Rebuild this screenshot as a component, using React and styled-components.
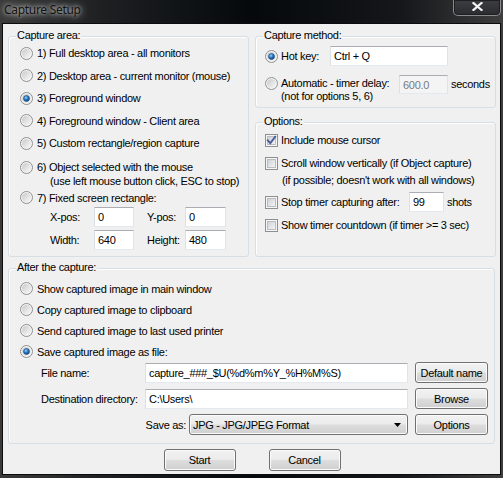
import React from 'react';
import styled, { createGlobalStyle } from 'styled-components';

const Global = createGlobalStyle`
  html, body { margin: 0; padding: 0; background: #1b1d1f; }
  body { width: 503px; height: 478px; overflow: hidden; }
  * { box-sizing: border-box; }
`;

const Window = styled.div`
  width: 503px;
  height: 478px;
  display: flex;
  flex-direction: column;
  padding: 0 2px 3px 2px;
  background: linear-gradient(to right, #3a3a3a 0%, #1e2022 20%, #05090c 50%, #15171a 80%, #3e3e3e 100%);
  font-family: "Liberation Sans", Arial, sans-serif;
  font-size: 11px;
  letter-spacing: -0.3px;
  color: #000;
`;

const TitleBar = styled.div`
  height: 23px;
  display: flex;
  align-items: flex-start;
  flex-shrink: 0;
`;

const Title = styled.div`
  font-family: "Noto Sans", "Open Sans", sans-serif;
  font-size: 12px;
  letter-spacing: -0.3px;
  line-height: 18px;
  padding: 1px 0 0 2px;
  color: #111;
  text-shadow: 0 0 4px rgba(255, 255, 255, 0.8), 0 0 9px rgba(255, 255, 255, 0.6), 0 0 16px rgba(255, 255, 255, 0.4);
`;

const CloseButton = styled.div`
  margin-left: auto;
  width: 48px;
  height: 16px;
  border: 1px solid #8a8a8a;
  border-top: none;
  border-radius: 0 0 5px 5px;
  box-shadow: inset 0 0 0 1px #1d1f21;
  background: linear-gradient(#3b3d40, #2a2c2f);
  display: flex;
  align-items: center;
  justify-content: center;
  padding-bottom: 3px;
`;

const Client = styled.div`
  flex: 1;
  border: 1px solid #0c0c0c;
  background: #f0f0f0;
  display: flex;
  flex-direction: column;
  padding: 12px 5px 0 5px;
`;

const TopRow = styled.div`
  display: grid;
  grid-template-columns: 241px 241px;
  column-gap: 6px;
`;

const RightColumn = styled.div`
  display: flex;
  flex-direction: column;
  gap: 14px;
`;

const Group = styled.div`
  position: relative;
  border: 1px solid #d5dfe5;
  border-radius: 3px;
  box-shadow: inset 1px 1px 0 rgba(255, 255, 255, 0.9);
  height: ${p => p.$h}px;
  padding: ${p => p.$pad};
  display: flex;
  flex-direction: column;
  margin-top: ${p => p.$mt || 0}px;
`;

const GroupLabel = styled.span`
  position: absolute;
  top: -8px;
  left: 7px;
  padding: 0 1px;
  line-height: 13px;
  background: #f0f0f0;
  white-space: nowrap;
`;

const Row = styled.div`
  display: flex;
  align-items: ${p => p.$align || 'center'};
  gap: ${p => (p.$gap != null ? p.$gap : 4)}px;
  height: ${p => (p.$h ? `${p.$h}px` : 'auto')};
  margin-top: ${p => p.$mt || 0}px;
  white-space: nowrap;
`;

const Lines = styled.div`
  line-height: ${p => p.$lh || 14}px;
  width: ${p => (p.$w ? `${p.$w}px` : 'auto')};
  flex-shrink: 0;
  white-space: nowrap;
  margin-top: ${p => p.$mt || 0}px;
`;

const SubLine = styled.div`
  line-height: ${p => p.$lh || 14}px;
  padding-left: ${p => p.$indent}px;
  white-space: nowrap;
`;

const Label = styled.span`
  display: inline-block;
  width: ${p => (p.$w ? `${p.$w}px` : 'auto')};
  flex-shrink: 0;
  white-space: nowrap;
`;

const Edit = styled.div`
  width: ${p => p.$w}px;
  height: ${p => p.$h || 20}px;
  flex-shrink: 0;
  border: 1px solid;
  border-color: #abadb3 #e2e3ea #e3e9ef #dbdfe6;
  background: ${p => (p.$disabled ? '#f4f4f4' : '#fff')};
  color: ${p => (p.$disabled ? '#7a7a7a' : '#000')};
  padding: 0 3px;
  display: flex;
  align-items: center;
  white-space: nowrap;
  overflow: hidden;
`;

const CoordGrid = styled.div`
  display: grid;
  grid-template-columns: 44px 40px 13px 38px 41px;
  grid-template-rows: 20px 20px;
  row-gap: 3px;
  margin-left: 30px;
  align-items: center;
`;

const Button = styled.button`
  font: inherit;
  letter-spacing: inherit;
  color: #000;
  width: ${p => p.$w || 73}px;
  height: ${p => p.$h || 21}px;
  padding: 0;
  border: 1px solid #707070;
  border-radius: 3px;
  background: linear-gradient(#f2f2f2 0%, #ebebeb 48%, #dddddd 52%, #cfcfcf 100%);
  box-shadow: inset 0 0 0 1px #fbfbfb;
  display: flex;
  align-items: center;
  justify-content: center;
  white-space: nowrap;
`;

const Select = styled.div`
  width: 219px;
  height: 21px;
  border: 1px solid #707070;
  border-radius: 3px;
  background: linear-gradient(#f2f2f2 0%, #ebebeb 48%, #dddddd 52%, #cfcfcf 100%);
  box-shadow: inset 0 0 0 1px #fbfbfb;
  display: flex;
  align-items: center;
  justify-content: space-between;
  padding: 0 6px 0 3px;
  white-space: nowrap;
`;

const FormGrid = styled.div`
  display: grid;
  grid-template-columns: 97px 263px 73px;
  grid-auto-rows: 21px;
  column-gap: 7px;
  row-gap: 5px;
  margin-left: 21px;
  align-items: center;
`;

const SaveAsCell = styled.div`
  grid-column: 1 / span 2;
  display: flex;
  justify-content: flex-end;
  align-items: center;
  gap: 3px;
`;

const ButtonBar = styled.div`
  display: flex;
  justify-content: center;
  gap: 33px;
  margin-top: 5px;
  padding-left: 1px;
`;

const RadioIcon = ({ checked, mt = 0 }) => (
  <svg width="13" height="13" viewBox="0 0 13 13" style={{ flexShrink: 0, marginTop: mt }}>
    <defs>
      <linearGradient id="rdFill" x1="0" y1="0" x2="1" y2="1">
        <stop offset="0" stopColor="#c8c8c8" />
        <stop offset="1" stopColor="#fafafa" />
      </linearGradient>
      <radialGradient id="rdDot" cx="40%" cy="35%" r="70%">
        <stop offset="0" stopColor="#9bd6fb" />
        <stop offset="0.45" stopColor="#2f7fc6" />
        <stop offset="1" stopColor="#0b3a6c" />
      </radialGradient>
    </defs>
    <circle cx="6.5" cy="6.5" r="6" fill="#f4f4f4" stroke="#8e8f8f" strokeWidth="1" />
    <circle cx="6.5" cy="6.5" r="4.6" fill="url(#rdFill)" />
    {checked && <circle cx="6.5" cy="6.5" r="3" fill="url(#rdDot)" stroke="#1b4e83" strokeWidth="0.6" />}
  </svg>
);

const CheckIcon = ({ checked }) => (
  <svg width="13" height="13" viewBox="0 0 13 13" style={{ flexShrink: 0 }}>
    <defs>
      <linearGradient id="cbFill" x1="0" y1="0" x2="1" y2="1">
        <stop offset="0" stopColor="#cbcfd5" />
        <stop offset="1" stopColor="#f7f7f7" />
      </linearGradient>
    </defs>
    <rect x="0.5" y="0.5" width="12" height="12" fill="#f6f6f6" stroke="#8e8f8f" />
    <rect x="2.5" y="2.5" width="8" height="8" fill="url(#cbFill)" stroke="#b9bdc3" strokeWidth="1" />
    {checked && (
      <path d="M2.8 6.4 L5.3 9.2 L10.2 2.8" stroke="#4a5f97" strokeWidth="1.9" fill="none" strokeLinecap="square" />
    )}
  </svg>
);

const CloseGlyph = () => (
  <svg width="11" height="9" viewBox="0 0 11 9">
    <path d="M1.5 1 L9.5 8 M9.5 1 L1.5 8" stroke="#f4f4f4" strokeWidth="2.2" strokeLinecap="square" />
  </svg>
);

const Arrow = () => (
  <svg width="7" height="4" viewBox="0 0 7 4">
    <path d="M0 0 H7 L3.5 4 Z" fill="#000" />
  </svg>
);

const areaItems = [
  ['1) Full desktop area - all monitors', false],
  ['2) Desktop area - current monitor (mouse)', false],
  ['3) Foreground window', true],
  ['4) Foreground window - Client area', false],
  ['5) Custom rectangle/region capture', false],
];

const afterItems = [
  ['Show captured image in main window', false],
  ['Copy captured image to clipboard', false],
  ['Send captured image to last used printer', false],
  ['Save captured image as file:', true],
];

export default function App() {
  return (
    <>
      <Global />
      <Window>
        <TitleBar>
          <Title>Capture Setup</Title>
          <CloseButton><CloseGlyph /></CloseButton>
        </TitleBar>
        <Client>
          <TopRow>
            <Group $h={221} $pad="5px 0 0 11px">
              <GroupLabel>Capture area:</GroupLabel>
              {areaItems.map(([t, c]) => (
                <Row key={t} $h={22.5}>
                  <RadioIcon checked={c} />
                  <span>{t}</span>
                </Row>
              ))}
              <Row $align="flex-start" $mt={5.5}>
                <RadioIcon mt={0.5} />
                <Lines>6) Object selected with the mouse</Lines>
              </Row>
              <SubLine $indent={30}>(use left mouse button click, ESC to stop)</SubLine>
              <Row $h={19}>
                <RadioIcon />
                <span>7) Fixed screen rectangle:</span>
              </Row>
              <CoordGrid>
                <span>X-pos:</span>
                <Edit $w={40}>0</Edit>
                <span />
                <span>Y-pos:</span>
                <Edit $w={41}>0</Edit>
                <span>Width:</span>
                <Edit $w={40}>640</Edit>
                <span />
                <span>Height:</span>
                <Edit $w={41}>480</Edit>
              </CoordGrid>
            </Group>
            <RightColumn>
              <Group $h={72} $pad="0 0 0 9px">
                <GroupLabel>Capture method:</GroupLabel>
                <Row $h={20} $mt={9} $gap={3}>
                  <RadioIcon checked />
                  <Label $w={46}>Hot key:</Label>
                  <Edit $w={118}>Ctrl + Q</Edit>
                </Row>
                <Row $align="flex-start" $mt={9} $gap={3}>
                  <RadioIcon mt={2} />
                  <Lines $lh={13} $w={115} $mt={1.5}>
                    Automatic - timer delay:<br />(not for options 5, 6)
                  </Lines>
                  <Edit $w={49} $h={19} $disabled>600.0</Edit>
                  <Lines $lh={19}>seconds</Lines>
                </Row>
              </Group>
              <Group $h={135} $pad="0 0 0 9px">
                <GroupLabel>Options:</GroupLabel>
                <Row $h={20} $mt={7} $gap={3}>
                  <CheckIcon checked />
                  <span>Include mouse cursor</span>
                </Row>
                <Row $h={20} $mt={3} $gap={3}>
                  <CheckIcon />
                  <span>Scroll window vertically (if Object capture)</span>
                </Row>
                <SubLine $indent={17}>(if possible; doesn't work with all windows)</SubLine>
                <Row $h={20} $mt={5} $gap={3}>
                  <CheckIcon />
                  <Label $w={125}>Stop timer capturing after:</Label>
                  <Edit $w={35}>99</Edit>
                  <span>shots</span>
                </Row>
                <Row $h={20} $mt={3} $gap={3}>
                  <CheckIcon />
                  <span>Show timer countdown (if timer &gt;= 3 sec)</span>
                </Row>
              </Group>
            </RightColumn>
          </TopRow>
          <Group $h={176} $mt={11} $pad="9px 0 0 11px">
            <GroupLabel>After the capture:</GroupLabel>
            {afterItems.map(([t, c]) => (
              <Row key={t} $h={21}>
                <RadioIcon checked={c} />
                <span>{t}</span>
              </Row>
            ))}
            <FormGrid>
              <Label>File name:</Label>
              <Edit $w={263}>capture_###_$U(%d%m%Y_%H%M%S)</Edit>
              <Button>Default name</Button>
              <Label>Destination directory:</Label>
              <Edit $w={263}>C:\Users\</Edit>
              <Button>Browse</Button>
              <SaveAsCell>
                <span>Save as:</span>
                <Select>
                  <span>JPG - JPG/JPEG Format</span>
                  <Arrow />
                </Select>
              </SaveAsCell>
              <Button>Options</Button>
            </FormGrid>
          </Group>
          <ButtonBar>
            <Button $w={72} $h={22}>Start</Button>
            <Button $w={72} $h={22}>Cancel</Button>
          </ButtonBar>
        </Client>
      </Window>
    </>
  );
}
